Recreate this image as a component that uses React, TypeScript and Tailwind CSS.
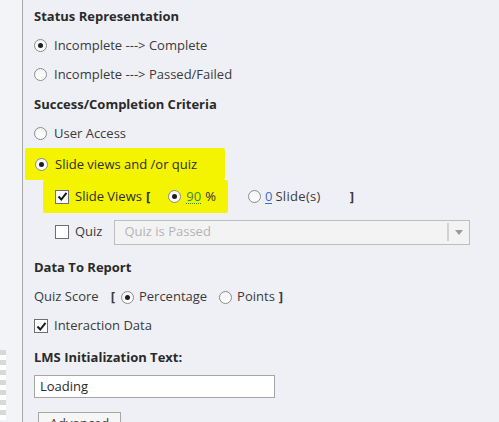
import React from "react";

function Radio({ checked }: { checked?: boolean }) {
  return (
    <span className="flex h-[13px] w-[13px] shrink-0 items-center justify-center rounded-full border border-[#8c8c8c] bg-gradient-to-b from-[#f4f4f4] to-white">
      {checked && <span className="h-[5px] w-[5px] rounded-full bg-[#1e1e1e]" />}
    </span>
  );
}

function Check({ checked }: { checked?: boolean }) {
  return (
    <span className="flex h-[14px] w-[14px] shrink-0 items-center justify-center border border-[#6e6e6e] bg-white">
      {checked && (
        <svg width="11" height="11" viewBox="0 0 11 11">
          <path d="M1.5 5.5 L4.3 8.5 L9.5 1.8" fill="none" stroke="#1a1a1a" strokeWidth="2" />
        </svg>
      )}
    </span>
  );
}

function Heading({ children }: { children: React.ReactNode }) {
  return <div className="flex h-[29px] items-center text-[13px] font-bold text-[#2a2a2a]">{children}</div>;
}

export default function App() {
  return (
    <div
      className="flex h-[422px] w-[499px] overflow-hidden bg-[#eff0f5] text-[13px] text-[#3a3a3a]"
      style={{ fontFamily: '"Open Sans", "Noto Sans", sans-serif' }}
    >
      <div className="flex w-[23px] shrink-0 flex-col border-r border-[#a8a8a8] bg-[#f3f4f7] pt-[350px] *:shrink-0">
        {Array.from({ length: 7 }).map((_, i) => (
          <div key={i} className="flex flex-col">
            <span className="h-[5px] w-[6px] bg-[#d8d8d8]" />
            <span className="h-[5px] w-[6px] bg-white" />
          </div>
        ))}
      </div>

      <div className="flex flex-1 flex-col pl-[11px] pt-[2px] *:shrink-0">
        <Heading>Status Representation</Heading>
        <div className="flex h-[29px] items-center gap-[7px]">
          <Radio checked />
          <span>Incomplete ---&gt; Complete</span>
        </div>
        <div className="flex h-[29px] items-center gap-[7px]">
          <Radio />
          <span>Incomplete ---&gt; Passed/Failed</span>
        </div>
        <div className="flex h-[30px] items-center pt-[1px] text-[13px] font-bold text-[#2a2a2a]">Success/Completion Criteria</div>
        <div className="flex h-[29px] items-center gap-[7px]">
          <Radio />
          <span>User Access</span>
        </div>

        <div className="-ml-[9px] flex h-[32px] w-[200px] items-center gap-[7px] rounded-[2px] bg-[#f4f300] pl-[10px] pt-[1px]">
          <Radio checked />
          <span className="text-[#2e2e2e]">Slide views and /or quiz</span>
        </div>
        <div className="flex h-[33px] items-center">
          <div className="ml-[9px] flex h-full w-[185px] items-center rounded-[2px] bg-[#f4f300] pl-[12px]">
            <Check checked />
            <span className="ml-[6px] text-[#2e2e2e]">Slide Views</span>
            <span className="ml-[4px] font-bold text-[#2e2e2e]">[</span>
            <span className="ml-[18px]">
              <Radio checked />
            </span>
            <span className="ml-[5px] border-b border-dotted border-[#2d8a2d] leading-[14px] text-[#3d8a2a]">90</span>
            <span className="ml-[4px] text-[#2e2e2e]">%</span>
          </div>
          <span className="ml-[20px]">
            <Radio />
          </span>
          <span className="ml-[4px] border-b border-[#3a6ec8] leading-[14px] text-[#3a6ec8]">0</span>
          <span className="ml-[3px] tracking-[0.3px]">Slide(s)</span>
          <span className="ml-[29px] font-bold">]</span>
        </div>

        <div className="flex h-[38px] items-center">
          <span className="ml-[21px]">
            <Check />
          </span>
          <span className="ml-[6px]">Quiz</span>
          <div className="ml-[12px] flex h-[25px] w-[356px] items-center border border-[#bdbdbd] bg-[#f3f3f3]">
            <span className="flex-1 pl-[9px] text-[#b4b4b4]">Quiz is Passed</span>
            <span className="h-[18px] w-[2px] border-l border-r border-[#d2d2d2] bg-white" />
            <span className="flex w-[20px] justify-center">
              <svg width="8" height="5" viewBox="0 0 8 5">
                <path d="M0 0 L8 0 L4 5 Z" fill="#9a9a9a" />
              </svg>
            </span>
          </div>
        </div>

        <div className="flex h-[31px] items-center pt-[2px] text-[13px] font-bold text-[#2a2a2a]">Data To Report</div>
        <div className="flex h-[30px] items-center">
          <span>Quiz Score</span>
          <span className="ml-[12px] font-bold">[</span>
          <span className="ml-[6px]">
            <Radio checked />
          </span>
          <span className="ml-[5px]">Percentage</span>
          <span className="ml-[12px]">
            <Radio />
          </span>
          <span className="ml-[5px]">Points</span>
          <span className="ml-[4px] font-bold">]</span>
        </div>
        <div className="flex h-[28px] items-center gap-[6px]">
          <Check checked />
          <span>Interaction Data</span>
        </div>
        <div className="flex h-[34px] items-center pt-[2px] text-[13px] font-bold text-[#2a2a2a]">LMS Initialization Text:</div>
        <div className="mt-[1px] flex h-[23px] w-[241px] items-center border border-[#a6a6a6] bg-white pl-[5px] text-[#2a2a2a]">
          Loading
        </div>
        <div className="ml-[4px] mt-[14px] flex h-[24px] w-[83px] items-center justify-center border border-[#a6a6a6] bg-[#f6f6f6]">
          Advanced
        </div>
      </div>
    </div>
  );
}
